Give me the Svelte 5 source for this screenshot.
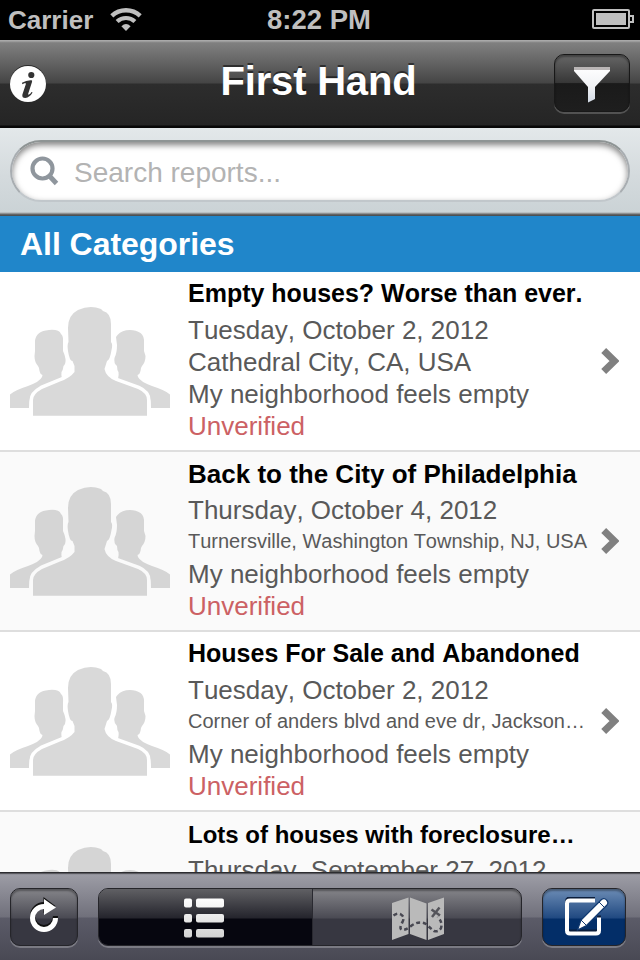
<script>
  const reports = [
    { title: 'Empty houses? Worse than ever.', date: 'Tuesday, October 2, 2012', place: 'Cathedral City, CA, USA', small: false },
    { title: 'Back to the City of Philadelphia', date: 'Thursday, October 4, 2012', place: 'Turnersville, Washington Township, NJ, USA', small: true },
    { title: 'Houses For Sale and Abandoned', date: 'Tuesday, October 2, 2012', place: 'Corner of anders blvd and eve dr, Jackson…', small: true },
    { title: 'Lots of houses with foreclosure…', date: 'Thursday, September 27, 2012', place: '', small: true }
  ];
</script>

<div class="screen">
  <header class="status">
    <div class="carrier">
      <span>Carrier</span>
      <svg width="32" height="24" viewBox="0 0 32 24" fill="none" stroke="#bfbfbf">
        <path d="M1.8 7.9A20.7 20.7 0 0 1 30.200 7.9" stroke-width="4.400" />
        <path d="M7.100 13.500A13 13 0 0 1 24.900 13.500" stroke-width="4.200" />
        <path d="M11.400 18.200Q16 13.800 20.600 18.200L16 23Z" fill="#bfbfbf" stroke="none" />
      </svg>
    </div>
    <span class="clock">8:22 PM</span>
    <div class="battery">
      <svg width="42" height="20" viewBox="0 0 42 20">
        <rect x="1" y="1" width="36" height="18" rx="1" fill="none" stroke="#bfbfbf" stroke-width="2" />
        <rect x="4" y="4" width="30" height="12" fill="#bfbfbf" />
        <path d="M38 7h3v6h-3" fill="none" stroke="#bfbfbf" stroke-width="2" />
      </svg>
    </div>
  </header>

  <nav class="navbar">
    <svg class="info" width="36" height="38" viewBox="0 0 36 38">
      <circle cx="18" cy="19" r="18" fill="#2a2a2a" />
      <circle cx="18" cy="20" r="18" fill="#fff" />
      <circle cx="21.300" cy="11" r="3.100" fill="#333" />
      <path d="M12 18.800Q16.500 16 21.500 16.300Q22.500 16.500 22 18L18.200 29.800Q18 31 19 30.600Q20.300 30 21.500 28L22.600 28.600Q19.800 33.500 15.300 34Q11.700 34 12.400 30.500L15.800 20.200Q16 18.800 14.500 19.200L12.300 20.300Z" fill="#333" />
    </svg>
    <h1>First Hand</h1>
    <button class="filter" aria-label="Filter">
      <svg width="36" height="36" viewBox="0 0 36 36">
        <defs>
          <linearGradient id="funnel" x2="0" y2="1">
            <stop offset="0" stop-color="#fff" /><stop offset=".55" stop-color="#f1f2f5" /><stop offset="1" stop-color="#d2dae5" />
          </linearGradient>
        </defs>
        <path d="M0 0H36V4L21 20V32L14 35.500V20L0 4Z" fill="url(#funnel)" />
        <path d="M0 0H36V3H0Z" fill="#b9b5b5" />
      </svg>
    </button>
  </nav>

  <div class="search">
    <div class="field">
      <svg width="30" height="32" viewBox="0 0 30 32" fill="none" stroke="#8f969d">
        <circle cx="12.500" cy="12.500" r="10" stroke-width="4.200" />
        <path d="M19 19.500L26.500 27.500" stroke-width="4.800" />
      </svg>
      <span>Search reports...</span>
    </div>
  </div>

  <h2 class="category">All Categories</h2>

  <main class="list">
    {#each reports as report, i}
      <article class="row" class:alt={i % 2 === 1}>
        <svg class="people" width="160" height="110" viewBox="0 0 160 110">
          <path d="M0 102V88.500Q4 84.500 18 80Q30 75.500 32 71L32.500 69Q30 68 29.500 65Q29.500 62 28 60Q24.500 56 24.500 50L25 45V35Q26 25 39 24Q49 23 51 28Q53.500 30 53 36V45Q54.500 48 55.500 53Q56 58 53.500 60Q53 64 51.500 66Q51 69 52 73Q40 78 25 85Q19 89 19 102Z" />
          <path d="M160 102V88.500Q156 84.500 142 80Q130 75.500 128 71L127.500 69Q130 68 130.500 65Q130.500 62 132 60Q135.500 56 135.500 50L134 45V37Q134.500 30 130.500 27Q126 24 120 24Q112 24 107.500 29L106 31L107 39Q107 47 104.500 52Q103.500 57 107 60Q107 64 108.500 66Q109 69 108 73Q120 78 135 84Q141 88 141 102Z" />
          <path class="front" d="M23 109.700V94Q23 88 32 83L50 75.500Q60 72 64.500 66V60L62.500 55Q59.500 55 58 45Q57 38 58.500 36L58 22Q58 9 68 4Q80-1.500 91 3L93 5Q101 7 101 18V36Q103 38 101.500 44Q100 54 97 55L94.500 63Q96 71 106 75L128 83Q137 87 137 94V109.700Z" />
        </svg>
        <div class="body">
          <h3 class="t{i}">{report.title}</h3>
          <p>{report.date}</p>
          <p class:small={report.small}>{report.place}</p>
          <p>My neighborhood feels empty</p>
          <p class="unverified">Unverified</p>
        </div>
        <svg class="chevron" width="18" height="26" viewBox="0 0 18 26">
          <path d="M2.700 2.500L13.500 13L2.700 23.500" fill="none" stroke="#808080" stroke-width="7" />
        </svg>
      </article>
    {/each}
  </main>

  <footer class="toolbar">
    <button class="btn refresh" aria-label="Refresh">
      <svg width="30" height="36" viewBox="0 0 30 36">
        <path d="M15 7.500A11.500 11.500 0 1 0 26.500 19" fill="none" stroke="#111" stroke-width="5" />
        <path d="M14.500 0L26.500 9L14.500 16Z" fill="#111" />
        <path d="M15 9.500A11.500 11.500 0 1 0 26.500 21" fill="none" stroke="#fff" stroke-width="5" />
        <path d="M15 2L27 10.500L15 18Z" fill="#fff" />
      </svg>
    </button>
    <div class="segments">
      <button class="seg active" aria-label="List">
        <svg width="40" height="40" viewBox="0 0 40 40">
          <defs>
            <linearGradient id="bars" gradientUnits="userSpaceOnUse" x1="0" y1="0" x2="0" y2="40">
              <stop offset="0" stop-color="#fff" /><stop offset="1" stop-color="#d2d2d2" />
            </linearGradient>
          </defs>
          <g fill="url(#bars)">
            <rect y=".5" width="8" height="9" rx="2" /><rect x="12" y=".5" width="28" height="9" rx="2" />
            <rect y="16" width="8" height="8.500" rx="2" /><rect x="12" y="16" width="28" height="8.500" rx="2" />
            <rect y="31" width="8" height="8.500" rx="2" /><rect x="12" y="31" width="28" height="8.500" rx="2" />
          </g>
        </svg>
      </button>
      <button class="seg map" aria-label="Map">
        <svg width="52" height="44" viewBox="0 0 52 44">
          <path fill="#bababa" d="M0 6L16.500 .5V37L0 43ZM18 .5L34.500 6.500V43L18 37ZM36 6L52 .5V37L36 43Z" />
          <path d="M1.500 18.500Q6 15.500 9 17.500Q13 20 10.500 25Q7 31 9.500 32.500Q13 34 19 29Q27 23 34 27Q38 31 42 34Q47 35 49 31Q51 25 45.500 20" fill="none" stroke="#484852" stroke-width="2.500" stroke-dasharray="4 2.800" />
          <path d="M39.500 12.500L48 18.500M47.500 10.500L40 20" fill="none" stroke="#55555b" stroke-width="2.500" />
        </svg>
      </button>
    </div>
    <button class="btn compose" aria-label="Compose">
      <svg width="46" height="42" viewBox="0 0 46 42">
        <path d="M31 3H6Q3 3 3 6V33Q3 36 6 36H32Q35 36 35 33V20" transform="translate(0 -1.500)" fill="none" stroke="#0b1d3b" stroke-width="4" />
        <path d="M31 3H6Q3 3 3 6V33Q3 36 6 36H32Q35 36 35 33V20" transform="translate(0 .5)" fill="none" stroke="#fff" stroke-width="4" />
        <path d="M13.500 33L17 23L37.500 2.500Q40.500 .5 42.500 3Q45 5.500 43 8L22.500 28.500Z" fill="#fff" stroke="#10386f" stroke-width="1.200" />
        <path d="M35 5L40.500 10.500M17 23L22.500 28.500" stroke="#10386f" stroke-width="1" />
      </svg>
    </button>
  </footer>
</div>

<style>
  :global(body) { margin: 0; }
  .screen {
    width: 640px; height: 960px; overflow: hidden;
    display: flex; flex-direction: column;
    font-family: "Liberation Sans", Arial, sans-serif;
    font-kerning: none;
    background: #fff;
  }
  .screen * { box-sizing: border-box; }
  h1, h2, h3, p { margin: 0; white-space: nowrap; }
  button { border: 0; padding: 0; margin: 0; display: flex; align-items: center; justify-content: center; }
  svg { display: block; flex: none; }

  .status {
    height: 40px; flex: none; background: #000; color: #bfbfbf;
    display: grid; grid-template-columns: 1fr auto 1fr; align-items: center;
    font-weight: bold; font-size: 27.5px; line-height: 40px;
  }
  .carrier { display: flex; align-items: center; gap: 16px; padding-left: 8px; }
  .carrier span { font-size: 26px; width: 86px; white-space: nowrap; }
  .clock { margin-right: 2px; }
  .battery { display: flex; justify-content: flex-end; padding: 0 6px 2px 0; }

  .navbar {
    height: 88px; flex: none; padding: 0 10px;
    display: flex; align-items: center; justify-content: space-between;
    background: linear-gradient(#a9a9a9 0 1px, #8d8d8d 2px, #808080 3px, #454545 43px, #2d2d2d 44px, #252525 85px, #080808 86px, #080808);
  }
  .info { margin-right: 37px; margin-top: -2px; }
  h1 { color: #fff; font-size: 40px; letter-spacing: -.2px; line-height: 44px; text-shadow: 0 -2px 0 rgba(0, 0, 0, .5); margin-top: -6px; }
  .filter {
    width: 76px; height: 58px; border-radius: 10px; border: 1px solid #181818;
    background: linear-gradient(#666, #363636 50%, #1a1a1a 51%, #1e1e1e);
    box-shadow: inset 0 2px 2px rgba(0, 0, 0, .35), 0 2px 0 rgba(255, 255, 255, .2);
    margin-top: -2px; padding-top: 3px;
  }

  .search {
    height: 88px; flex: none; padding: 12px 10px 14px;
    background: linear-gradient(#e3e8ea, #d4dadd 55%, #cbd3d6 84px, #a7abad 85px, #777 86px, #4c5053 87px, #4c5053);
  }
  .field {
    height: 62px; border-radius: 31px; background: #fff;
    border: 2px solid; border-color: #8e9494 #a8adb1 #c1c7cb;
    box-shadow: inset 0 3px 6px rgba(0, 0, 0, .5);
    display: flex; align-items: center; padding: 1px 0 0 18px; gap: 14px;
    color: #b3b3b3; font-size: 28px; line-height: 34px;
  }
  .field span { white-space: nowrap; padding-top: 2px; }

  .category {
    height: 56px; flex: none; padding-left: 20px; background: #2086ca; color: #fff;
    font-size: 32px; line-height: 56px; letter-spacing: -.05px;
  }

  .list { flex: 1; min-height: 0; overflow: hidden; }
  .row {
    height: 180px; padding: 0 20px 0 10px; border-bottom: 2px solid #dedede;
    display: flex; align-items: center; background: #fff;
  }
  .row.alt { background: #fafafa; }
  .people { fill: #d9d9d9; }
  .alt .people { fill: #d5d5d5; }
  .front { stroke: #fff; stroke-width: 7; paint-order: stroke; }
  .alt .front { stroke: #fafafa; }
  .body { width: 413px; flex: none; padding-left: 18px; align-self: flex-start; padding-top: 6px; }
  h3 { font-size: 25px; line-height: 30px; height: 32px; color: #000; margin-bottom: 4px; }
  .t1 { font-size: 26px; line-height: 32px; }
  .t3 { font-size: 24px; line-height: 34px; }
  p { font-size: 26px; line-height: 32px; height: 32px; color: #595959; }
  p.small { font-size: 20px; line-height: 30px; }
  p.unverified { color: #cc6164; }
  .chevron { margin-left: 18px; }

  .toolbar {
    height: 88px; flex: none; padding: 16px 14px 0 10px;
    display: flex; align-items: flex-start; justify-content: space-between;
    background: linear-gradient(#2c2c30 0 1px, #85858d 2px, #9c9ca5 3px, #70707b 45px, #5b5b68 46px, #494954);
  }
  .btn, .segments {
    height: 58px; border-radius: 10px; border: 1px solid #25252a;
    background: linear-gradient(#85858a, #4a4a53 29px, #373741 30px, #373741);
    box-shadow: inset 0 2px 2px rgba(0, 0, 0, .35), 0 2px 0 rgba(255, 255, 255, .25);
  }
  .refresh { width: 68px; padding-bottom: 4px; }
  .segments { width: 424px; display: flex; overflow: hidden; }
  .seg { height: 100%; background: none; }
  .seg.active { width: 214px; padding: 2px 3px 0 0; background: linear-gradient(#606064, #24242c 29px, #06060f 30px, #06060f); border-right: 1px solid #292930; }
  .seg.map { flex: 1; padding: 4px 0 0 2px; }
  .btn.compose { width: 84px; padding: 2px 0 0 6px; background: linear-gradient(#6c8cb5, #204981 29px, #032e68 30px, #032e68); }
</style>
